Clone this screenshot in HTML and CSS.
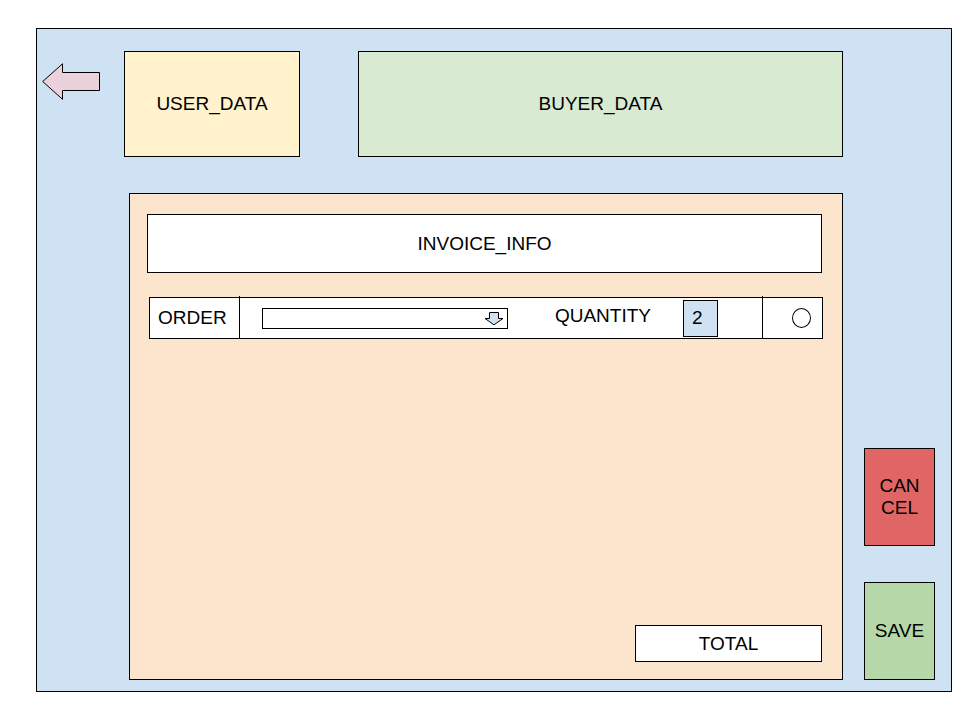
FILE: index.html
```html
<!DOCTYPE html>
<html lang="en">
<head>
  <meta charset="utf-8">
  <meta name="viewport" content="width=device-width, initial-scale=1">
  <title>Invoice</title>
  <link rel="stylesheet" href="styles.css">
</head>
<body>
  <div class="frame">
    <button class="back" type="button" aria-label="Back">
      <svg class="back-icon" viewBox="0 0 59 38" aria-hidden="true">
        <path d="M.7 18.5 20.5.8V9.500H57.500V27.500H20.500V36.300Z"/>
      </svg>
    </button>

    <main class="main">
      <header class="parties">
        <section class="box user">USER_DATA</section>
        <section class="box buyer">BUYER_DATA</section>
      </header>

      <section class="invoice">
        <div class="box info">INVOICE_INFO</div>
        <div class="order-row">
          <label class="order-label" for="order">ORDER</label>
          <div class="order-body">
            <div class="picker">
              <select class="picker-select" id="order"><option value=""></option></select>
              <svg class="picker-icon" viewBox="0 0 20 14" aria-hidden="true">
                <path d="M5.500.500H14.500V6.500H19L10 12.800 1 6.500H5.500Z"/>
              </svg>
            </div>
            <div class="quantity">
              <label class="quantity-label" for="quantity">QUANTITY</label>
              <input class="quantity-input" id="quantity" type="text" inputmode="numeric" value="2">
            </div>
          </div>
          <div class="order-pick">
            <input class="pick" type="radio" name="line" aria-label="Select order">
          </div>
        </div>
        <div class="box total">TOTAL</div>
      </section>
    </main>

    <div class="actions">
      <button class="action cancel" type="button">CAN<br>CEL</button>
      <button class="action save" type="button">SAVE</button>
    </div>
  </div>
</body>
</html>
```
FILE: styles.css
```css
*,
*::before {
  box-sizing: border-box;
}

body {
  margin: 0;
  padding: 28px 8px 28px 36px;
  background: #fff;
  color: #000;
  font-family: "Liberation Sans", Arial, sans-serif;
  font-size: 19px;
  line-height: 22px;
}

button,
input,
select {
  margin: 0;
  font: inherit;
  color: inherit;
}

.frame {
  display: flex;
  min-height: calc(100vh - 56px);
  padding: 22px 16px 11px 5px;
  border: 1px solid #000;
  background: #cfe2f3;
}

.back {
  align-self: flex-start;
  width: 58px;
  margin: 12px 24px 0 0;
  padding: 0;
  border: 0;
  background: none;
}

.back-icon {
  display: block;
  width: 59px;
  height: 38px;
  fill: #ead1dc;
  stroke: #000;
}

.main {
  display: flex;
  flex: 1;
  flex-direction: column;
  gap: 36px;
}

.parties {
  display: grid;
  grid-template-columns: 176fr 485fr;
  gap: 58px;
}

.box {
  display: flex;
  align-items: center;
  justify-content: center;
  border: 1px solid #000;
  background: #fff;
}

.user,
.buyer {
  min-height: 106px;
}

.user {
  background: #fff2cc;
}

.buyer {
  background: #d9ead3;
}

.invoice {
  display: flex;
  flex: 1;
  flex-direction: column;
  gap: 24px;
  margin-left: 5px;
  padding: 20px 20px 17px 17px;
  border: 1px solid #000;
  background: #fce5cd;
}

.info {
  min-height: 59px;
}

.order-row {
  display: flex;
  min-height: 42px;
  margin: 0 -1px 0 2px;
  border: 1px solid #000;
  background: #fff;
}

.order-label {
  display: flex;
  align-items: center;
  width: 89px;
  padding-left: 8px;
}

.order-body {
  display: flex;
  flex: 1;
  align-items: center;
  justify-content: space-between;
  padding: 0 44px 0 22px;
}

/* Cell dividers run slightly past the top edge of the row */
.order-body,
.order-pick {
  margin-top: -2px;
  padding-top: 2px;
  border-left: 1px solid #000;
}

.picker {
  position: relative;
  flex: 0 1 246px;
}

.picker-select {
  display: block;
  width: 100%;
  height: 21px;
  padding: 0 24px 0 4px;
  border: 1px solid #000;
  border-radius: 0;
  background: #fff;
  font-size: 14px;
  line-height: 18px;
  appearance: none;
}

.picker-icon {
  position: absolute;
  top: 4px;
  right: 4px;
  width: 20px;
  height: 14px;
  fill: #cfe2f3;
  stroke: #000;
  pointer-events: none;
}

.quantity {
  display: flex;
  align-items: center;
  gap: 32px;
}

.quantity-label {
  padding-bottom: 4px;
}

.quantity-input {
  width: 35px;
  height: 37px;
  padding: 0 0 0 8px;
  border: 1px solid #000;
  border-radius: 0;
  background: #cfe2f3;
}

.order-pick {
  display: flex;
  align-items: center;
  justify-content: flex-end;
  width: 60px;
  padding-right: 11px;
}

.pick {
  width: 19px;
  height: 20px;
  border: 1px solid #000;
  border-radius: 50%;
  background: #fff;
  appearance: none;
}

.pick:checked {
  background: #000;
}

.total {
  align-self: flex-end;
  width: 187px;
  min-height: 37px;
  margin-top: auto;
}

.actions {
  display: flex;
  flex-direction: column;
  justify-content: flex-end;
  gap: 36px;
  width: 71px;
  margin-left: 21px;
}

.action {
  height: 98px;
  padding: 0;
  border: 1px solid #000;
}

.cancel {
  background: #e06666;
}

.save {
  background: #b6d7a8;
}
```
